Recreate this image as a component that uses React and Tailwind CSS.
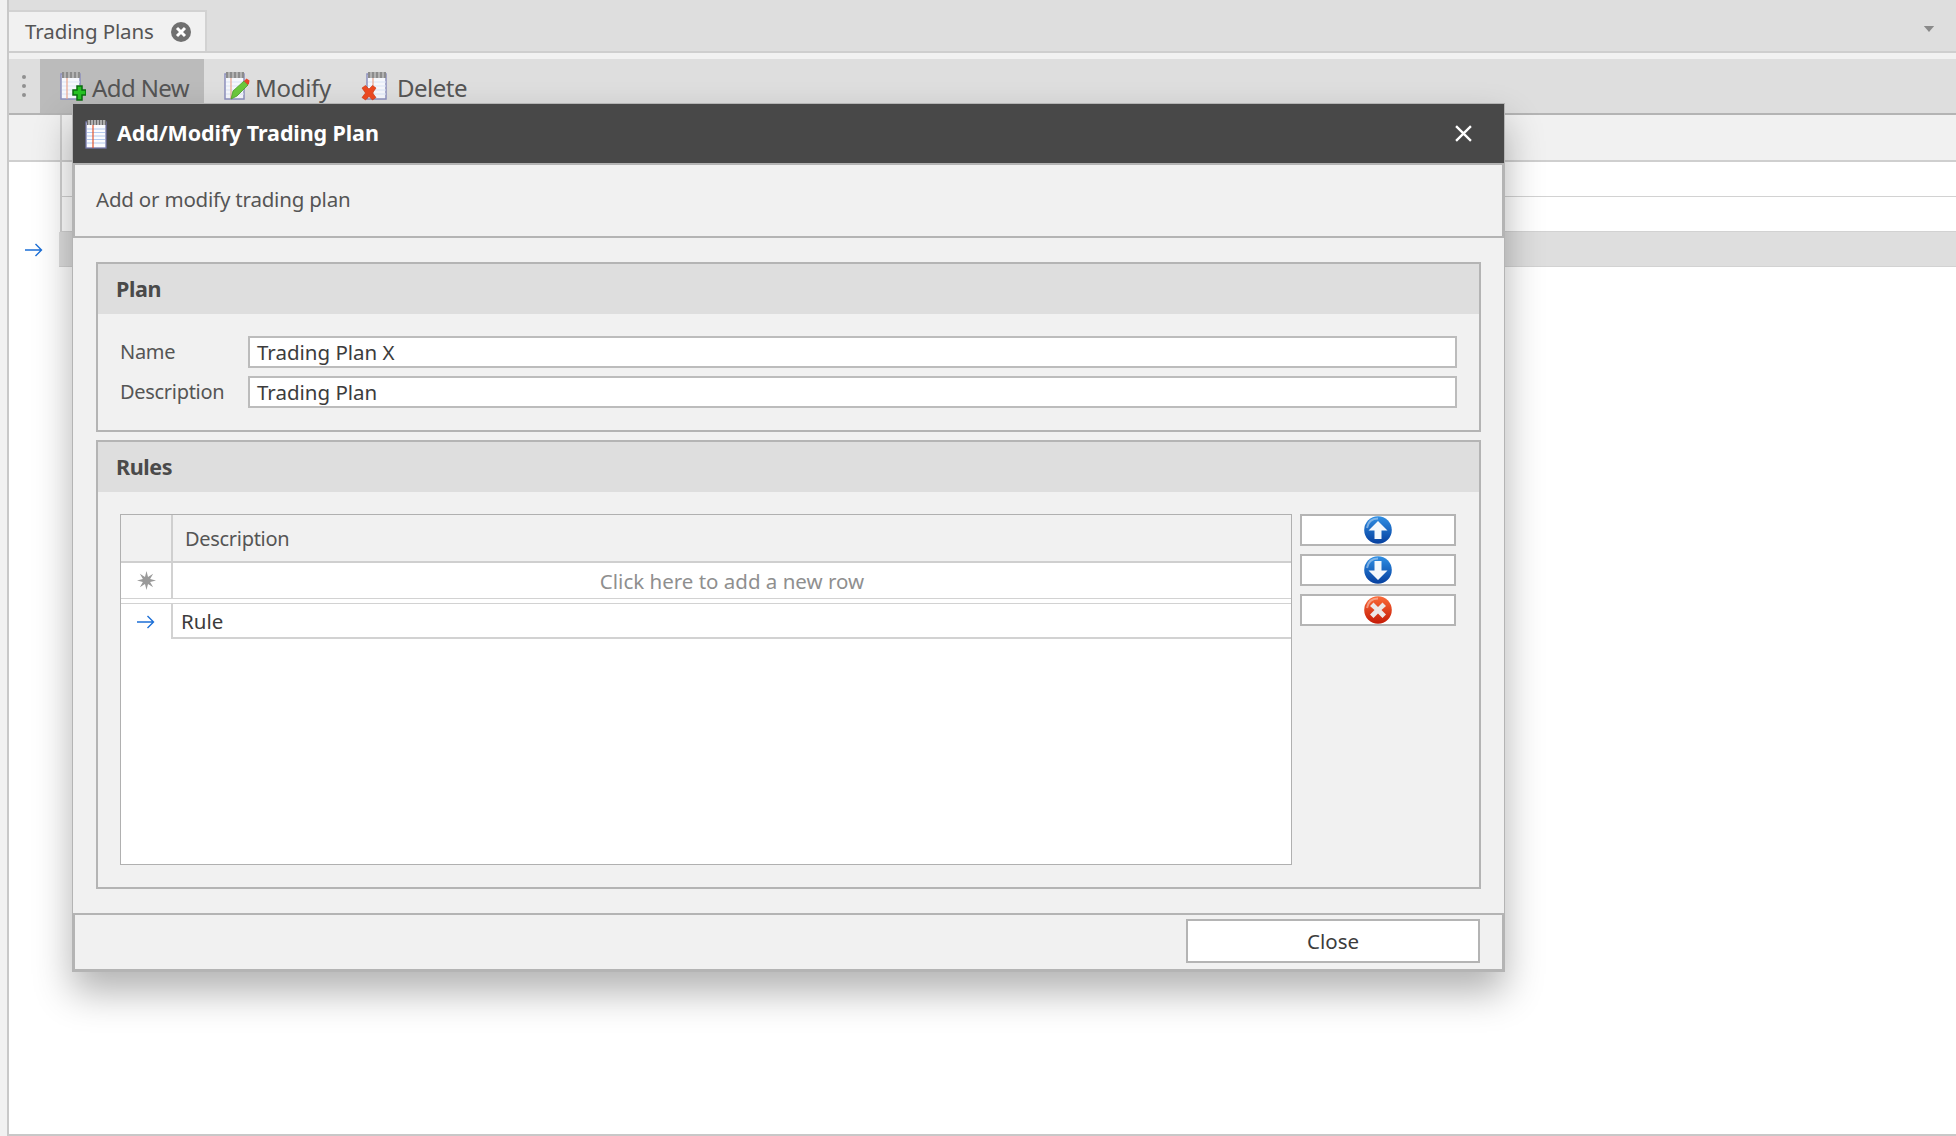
const F = '[font-family:"Noto_Sans",sans-serif]';

function Notepad() {
  return (
    <svg viewBox="0 0 24 30" className="w-[24px] h-[30px] shrink-0">
      <rect x="2" y="3" width="20" height="26" fill="#fbfcff" stroke="#7276a8" strokeWidth="1.3" />
      <rect x="3" y="1" width="19" height="5" fill="#6b6b6b" />
      <path d="M5 1v5M8 1v5M11 1v5M14 1v5M17 1v5M20 1v5" stroke="#f2f2f2" strokeWidth="1" />
      <path d="M3 10h18M3 13.5h18M3 17h18M3 20.5h18M3 24h18" stroke="#b4caef" strokeWidth="1" />
      <path d="M9 6v23" stroke="#e4542c" strokeWidth="1.2" />
    </svg>
  );
}

function Sheet({ x = 0 }) {
  return (
    <g transform={`translate(${x} 0)`}>
      <rect x="1" y="3" width="19" height="25" fill="#f6f8fd" stroke="#8d90bd" strokeWidth="1.5" />
      <rect x="2" y="1" width="18" height="6" fill="#8c8c8c" />
      <path d="M5 1v6M9 1v6M13 1v6M17 1v6" stroke="#d8d8d8" strokeWidth="1" />
      <path d="M2 11h18M2 15h18M2 19h18M2 23h18" stroke="#dbe4f5" strokeWidth="1" />
      <path d="M7 7v21" stroke="#eba68e" strokeWidth="1.2" />
    </g>
  );
}

function AddIcon() {
  return (
    <svg viewBox="0 0 26 30" className="w-[26px] h-[30px] shrink-0">
      <Sheet />
      <path d="M13 19h4v-4h5v4h4v5h-4v5h-5v-5h-4z" fill="#27c324" stroke="#0b6f10" strokeWidth="1.5" />
    </svg>
  );
}

function ModifyIcon() {
  return (
    <svg viewBox="0 0 26 30" className="w-[26px] h-[30px] shrink-0">
      <Sheet />
      <path d="M7 28l2-8L20 10l4 4L13 25z" fill="#6cc83c" stroke="#4d9a2a" strokeWidth="0.8" />
      <path d="M20 10l2.5-2.5 3 2-.5 3-1 1.5z" fill="#e8452c" />
    </svg>
  );
}

function DeleteIcon() {
  return (
    <svg viewBox="0 0 26 30" className="w-[26px] h-[30px] shrink-0">
      <Sheet x={5} />
      <path d="M1 17l3.5-2.5L8 18l3.5-3.5 3.5 2.5-3.500 5 3.500 4.500-3.500 2.500L8 25.500 4.500 29 1 26.500l3.500-4.500z" fill="#ee4a22" stroke="#c9340e" strokeWidth="0.6" />
    </svg>
  );
}

function Arrow() {
  return (
    <svg viewBox="0 0 18 14" className="w-[18px] h-[14px]">
      <path d="M0 7h16.500M10.500 1l6 6-6 6" fill="none" stroke="#1c6fd6" strokeWidth="1.4" />
    </svg>
  );
}

function Ball({ kind }) {
  const id = kind === "x" ? "gr" : "gb";
  return (
    <svg viewBox="0 0 28 28" className="w-[28px] h-[28px]">
      <defs>
        <linearGradient id="gb" x1="0" y1="0" x2="0" y2="1">
          <stop offset="0" stopColor="#2f8fe4" />
          <stop offset="1" stopColor="#063f9e" />
        </linearGradient>
        <linearGradient id="gr" x1="0" y1="0" x2="0" y2="1">
          <stop offset="0" stopColor="#fb6b38" />
          <stop offset="1" stopColor="#c41a06" />
        </linearGradient>
      </defs>
      <circle cx="14" cy="14" r="13.800" fill={`url(#${id})`} />
      <path d="M3 12C4 6 8 2.500 14 2.500" fill="none" stroke="#fff" strokeOpacity="0.4" strokeWidth="2" />
      {kind === "up" && <path d="M14 5l9.500 9.500H17.500V23h-7v-8.500H4.500z" fill="#f4f8fc" />}
      {kind === "down" && <path d="M14 24l9.500-9.500H17.500V5h-7v9.500H4.500z" fill="#f4f8fc" />}
      {kind === "x" && <path d="M9.500 6.500l4.500 4.500 4.500-4.500 3.500 3.500-4.500 4 4.500 4.500-3.500 3.500-4.500-4.500-4.500 4.500-3.500-3.500 4.500-4.500-4.500-4z" fill="#ece8e8" />}
    </svg>
  );
}

function Group({ title, children, className }) {
  return (
    <section className={`border-2 border-[#b4b4b4] bg-[#f1f1f1] ${className}`}>
      <div className="h-[50px] bg-[#dedede] pl-[18px] flex items-center text-[21.5px] font-bold text-[#4a4a4a] tracking-[-0.4px]">{title}</div>
      {children}
    </section>
  );
}

function Field({ label, value }) {
  return (
    <div className="flex items-center h-[32px]">
      <div className="w-[128px] text-[20px] text-[#555] tracking-[-0.3px]">{label}</div>
      <div className="flex-1 h-[32px] border-2 border-[#bcbcbc] bg-white pl-[7px] flex items-center text-[20.5px] text-[#3c3c3c]">{value}</div>
    </div>
  );
}

function SideBtn({ kind }) {
  return (
    <div className="h-[32px] border-2 border-[#b4b4b4] bg-white flex items-center justify-center">
      <Ball kind={kind} />
    </div>
  );
}

function ToolItem({ icon, label, className, gap }) {
  return (
    <div className={`flex items-center h-[54px] ${className}`}>
      {icon}
      <span className={`text-[24px] text-[#555] relative top-[2px] ${gap}`}>{label}</span>
    </div>
  );
}

export default function App() {
  return (
    <div className={`relative w-[1956px] h-[1136px] overflow-hidden bg-white flex ${F}`}>
      <div className="w-[9px] h-full bg-[#f1f1f1] border-r-2 border-[#c8c8c8]" />
      <div className="flex-1 flex flex-col border-b-2 border-[#c8c8c8]">
        {/* Tab strip */}
        <div className="h-[53px] bg-[#dedede] border-b-2 border-[#cecece] pt-[10px] flex justify-between">
          <div className="w-[198px] h-[41px] bg-[#f1f1f1] border-t-2 border-r-2 border-[#d2d2d2] flex items-center pl-[16px]">
            <span className="text-[20.5px] text-[#555] tracking-[-0.1px]">Trading Plans</span>
            <svg viewBox="0 0 20 20" className="w-[20px] h-[20px] ml-[17px]">
              <circle cx="10" cy="10" r="10" fill="#6f6f6f" />
              <path d="M6 6l8 8M14 6l-8 8" stroke="#fff" strokeWidth="3" />
            </svg>
          </div>
          <svg viewBox="0 0 12 7" className="w-[12px] h-[6px] mt-[16px] mr-[21px]">
            <path d="M0 0h12L6 7z" fill="#8a8a8a" />
          </svg>
        </div>
        <div className="h-[6px] bg-[#f1f1f1]" />
        {/* Toolbar */}
        <div className="h-[54px] bg-[#dedede] flex items-center">
          <div className="w-[30px] flex flex-col items-center gap-[5px]">
            <div className="w-[4px] h-[4px] rounded-full bg-[#909090]" />
            <div className="w-[4px] h-[4px] rounded-full bg-[#909090]" />
            <div className="w-[4px] h-[4px] rounded-full bg-[#909090]" />
          </div>
          <div className="w-[1px]" />
          <ToolItem icon={<AddIcon />} label="Add New" className="w-[164px] bg-[#bbbbbb] pl-[20px]" gap="ml-[6px] tracking-[-0.6px]" />
          <ToolItem icon={<ModifyIcon />} label="Modify" className="ml-[20px]" gap="ml-[5px] tracking-[-0.3px]" />
          <ToolItem icon={<DeleteIcon />} label="Delete" className="ml-[30px]" gap="ml-[10px] tracking-[-0.5px]" />
        </div>
        {/* Background grid */}
        <div className="h-[49px] bg-[#f1f1f1] border-t-2 border-b-2 border-t-[#b4b4b4] border-b-[#cfcfcf] flex">
          <div className="w-[53px] border-r-2 border-[#cfcfcf]" />
        </div>
        <div className="h-[35px] flex">
          <div className="w-[53px] border-r-2 border-[#d2d2d2]" />
          <div className="flex-1 border-b border-[#d2d2d2]" />
        </div>
        <div className="h-[35px] flex">
          <div className="w-[53px] border-r-2 border-[#d2d2d2]" />
          <div className="flex-1 border-b border-[#d2d2d2]" />
        </div>
        <div className="h-[35px] flex">
          <div className="w-[50px] flex items-center pl-[16px]">
            <Arrow />
          </div>
          <div className="flex-1 bg-[#dedede] border-b border-[#d2d2d2]" />
        </div>
      </div>

      {/* Modal dialog */}
      <div className="absolute left-[72px] top-[103px] w-[1433px] h-[869px] flex flex-col bg-[#f1f1f1] border border-[#b4b4b4] shadow-[0_20px_36px_rgba(0,0,0,0.3)]">
        <div className="h-[59px] shrink-0 bg-[#484848] flex items-center pl-[11px] pr-[32px]">
          <Notepad />
          <span className="ml-[9px] text-[21.5px] font-bold text-white tracking-[-0.1px]">Add/Modify Trading Plan</span>
          <svg viewBox="0 0 16 16" className="w-[17px] h-[17px] ml-auto">
            <path d="M1 1l14 14M15 1L1 15" stroke="#fff" strokeWidth="2.2" />
          </svg>
        </div>
        <div className="h-[75px] shrink-0 border-2 border-[#b4b4b4] pl-[21px] pb-[2px] flex items-center text-[20.5px] text-[#555] tracking-[-0.2px]">
          Add or modify trading plan
        </div>
        <div className="flex-1 flex flex-col px-[23px] pt-[24px]">
          <Group title="Plan" className="h-[170px] shrink-0">
            <div className="px-[22px] pt-[22px] flex flex-col gap-[8px]">
              <Field label="Name" value="Trading Plan X" />
              <Field label="Description" value="Trading Plan" />
            </div>
          </Group>
          <Group title="Rules" className="h-[449px] shrink-0 mt-[8px]">
            <div className="px-[22px] pt-[22px] flex gap-[8px]">
              <div className="w-[1172px] h-[351px] border border-[#b0b0b0] bg-white flex flex-col">
                <div className="h-[48px] shrink-0 bg-[#f1f1f1] border-b-2 border-[#cfcfcf] flex">
                  <div className="w-[52px] border-r-2 border-[#cfcfcf]" />
                  <div className="pl-[12px] pt-[1px] flex items-center text-[20px] text-[#555] tracking-[-0.3px]">Description</div>
                </div>
                <div className="h-[36px] shrink-0 border-b border-[#d2d2d2] flex">
                  <div className="w-[52px] border-r-2 border-[#d2d2d2] flex items-center justify-center">
                    <svg viewBox="0 0 20 20" className="w-[19px] h-[19px]">
                      <path d="M10 0l1.600 6.200L17 3l-3.200 5.400L20 10l-6.200 1.600L17 17l-5.400-3.200L10 20l-1.600-6.200L3 17l3.200-5.400L0 10l6.200-1.600L3 3l5.400 3.200z" fill="#9a9a9a" />
                    </svg>
                  </div>
                  <div className="flex-1 pt-[1px] flex items-center justify-center text-[20.5px] text-[#8f8f8f]">Click here to add a new row</div>
                </div>
                <div className="h-[4px] shrink-0" />
                <div className="h-[36px] shrink-0 flex">
                  <div className="w-[50px] border-t border-[#d2d2d2] flex items-center justify-center">
                    <Arrow />
                  </div>
                  <div className="flex-1 border-l-2 border-t border-b-2 border-[#d2d2d2] pl-[8px] pt-[1px] flex items-center text-[20.5px] text-[#3c3c3c]">Rule</div>
                </div>
              </div>
              <div className="w-[156px] flex flex-col gap-[8px]">
                <SideBtn kind="up" />
                <SideBtn kind="down" />
                <SideBtn kind="x" />
              </div>
            </div>
          </Group>
        </div>
        <div className="h-[58px] shrink-0 border-2 border-[#b4b4b4] flex items-start justify-end pt-[4px] pr-[22px]">
          <div className="w-[294px] h-[44px] border-2 border-[#b4b4b4] bg-white flex items-center justify-center text-[20.5px] text-[#3c3c3c]">Close</div>
        </div>
      </div>
    </div>
  );
}
